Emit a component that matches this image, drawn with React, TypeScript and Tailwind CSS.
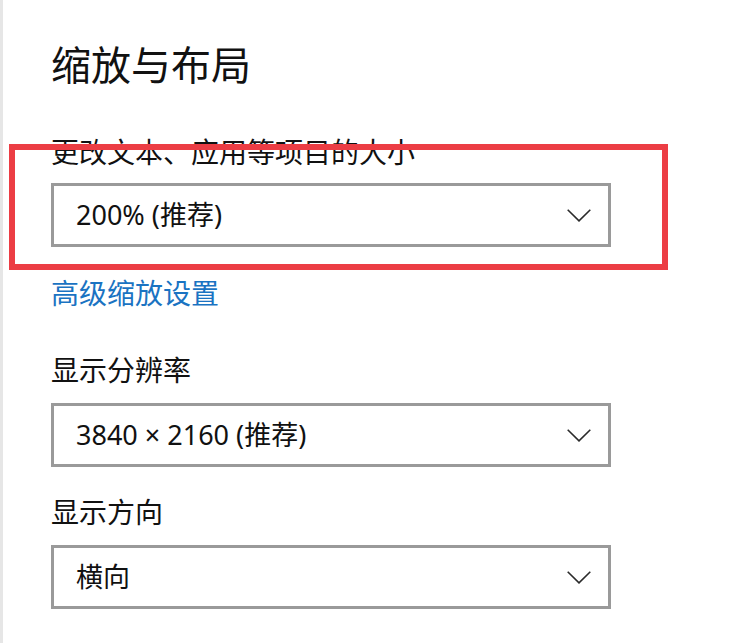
import React from "react";

const font = { fontFamily: '"Noto Sans", "Noto Sans CJK SC", sans-serif' };

function Chevron() {
  return (
    <svg width="24" height="13" viewBox="0 0 24 13" fill="none" className="shrink-0">
      <polyline points="0.7,0.7 12,11.8 23.3,0.7" stroke="#2b2b2b" strokeWidth="1.6" />
    </svg>
  );
}

function Dropdown({ value }: { value: string }) {
  return (
    <div className="w-[560px] h-[64px] border-[3px] border-[#9a9a9a] bg-white flex items-center justify-between pl-[22px] pr-[17px]">
      <span className="text-[27px] leading-[28px] text-[#111]">{value}</span>
      <Chevron />
    </div>
  );
}

export default function App() {
  return (
    <div
      className="relative w-[737px] h-[643px] bg-white border-l-[3px] border-[#e6e6e6] overflow-hidden"
      style={font}
    >
      <div className="flex flex-col items-start pl-[48px]">
        <h1 className="mt-[45px] text-[40px] leading-[40px] text-[#111] font-normal">缩放与布局</h1>
        <div className="mt-[53px] text-[28px] leading-[28px] text-[#111]">更改文本、应用等项目的大小</div>
        <div className="mt-[17px]">
          <Dropdown value="200% (推荐)" />
        </div>
        <a className="mt-[32px] text-[28px] leading-[28px] text-[#1a73c2]">高级缩放设置</a>
        <div className="mt-[49px] text-[28px] leading-[28px] text-[#111]">显示分辨率</div>
        <div className="mt-[19px]">
          <Dropdown value="3840 × 2160 (推荐)" />
        </div>
        <div className="mt-[31px] text-[28px] leading-[28px] text-[#111]">显示方向</div>
        <div className="mt-[19px]">
          <Dropdown value="横向" />
        </div>
      </div>
      <div className="absolute left-[6px] top-[144px] w-[659px] h-[126px] border-[6px] border-[#ec3d44] pointer-events-none" />
    </div>
  );
}
